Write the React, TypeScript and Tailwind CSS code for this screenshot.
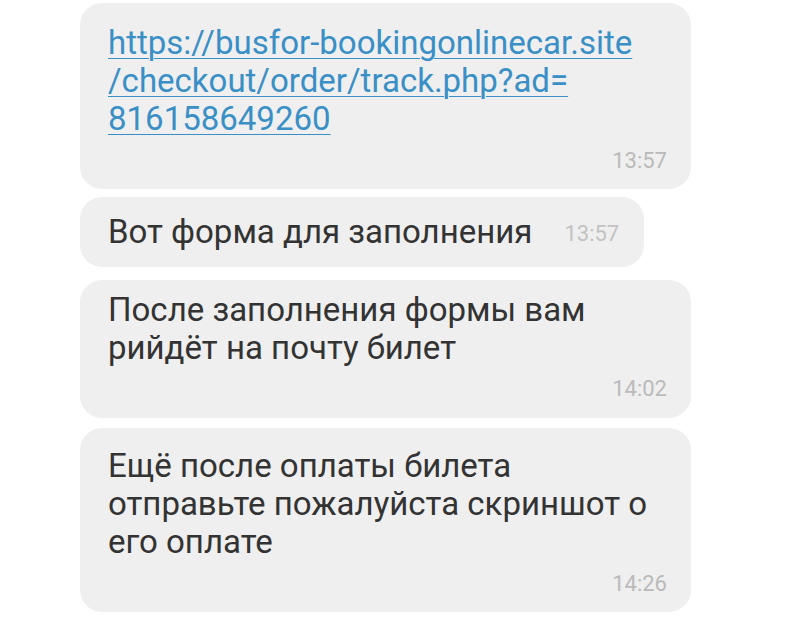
import React from 'react';

const font = { fontFamily: 'Roboto, "Noto Sans", sans-serif' };

function Time({ children }: { children: React.ReactNode }) {
  return <div className="text-right text-[22px] leading-[22px] text-[#bababa]">{children}</div>;
}

export default function App() {
  return (
    <div className="w-[800px] h-[623px] bg-white overflow-hidden" style={font}>
      <div className="flex flex-col items-start pl-[80px] pt-[3px]">
        {/* ссылка */}
        <div className="w-[611px] h-[186px] rounded-[22px] bg-[#efefef] pl-[28px] pr-[24px] pt-[21px] flex flex-col">
          <a className="text-[33px] leading-[38px] text-[#3a8fc6] underline decoration-1 underline-offset-[4px] break-all">
            https://busfor-bookingonlinecar.site
            <br />/checkout/order/track.php?ad=
            <br />816158649260
          </a>
          <div className="mt-auto mb-[17px]">
            <Time>13:57</Time>
          </div>
        </div>

        <div className="mt-[8px] h-[70px] rounded-[22px] bg-[#efefef] pl-[28px] pr-[25px] flex items-center gap-[32px]">
          <span className="text-[33px] leading-[38px] text-[#333333]">Вот форма для заполнения</span>
          <span className="text-[22px] leading-[22px] text-[#c2c2c2] mt-[4px]">13:57</span>
        </div>

        <div className="mt-[13px] w-[611px] h-[138px] rounded-[22px] bg-[#efefef] pl-[28px] pr-[24px] pt-[11px] flex flex-col">
          <div className="text-[33px] leading-[38px] text-[#333333]">
            После заполнения формы вам
            <br />рийдёт на почту билет
          </div>
          <div className="mt-auto mb-[18px]">
            <Time>14:02</Time>
          </div>
        </div>

        <div className="mt-[10px] w-[611px] h-[184px] rounded-[22px] bg-[#efefef] pl-[28px] pr-[24px] pt-[19px] flex flex-col">
          <div className="text-[33px] leading-[38px] text-[#333333]">
            Ещё после оплаты билета
            <br />отправьте пожалуйста скриншот о
            <br />его оплате
          </div>
          <div className="mt-auto mb-[17px]">
            <Time>14:26</Time>
          </div>
        </div>
      </div>
    </div>
  );
}
